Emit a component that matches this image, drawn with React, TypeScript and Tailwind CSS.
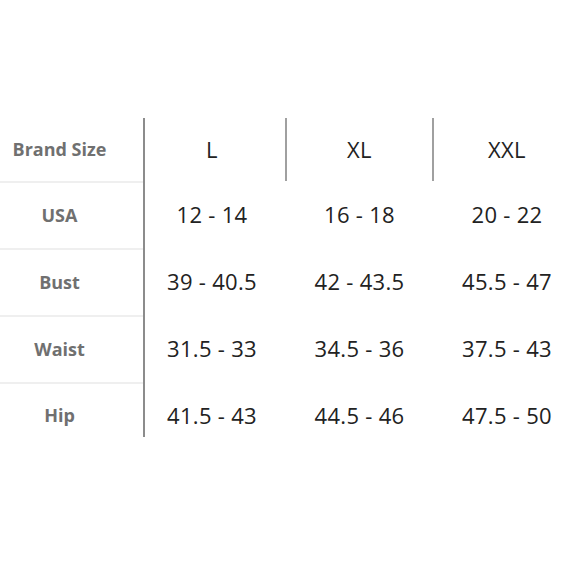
const header = ['L', 'XL', 'XXL'];

const rows: { label: string; values: string[] }[] = [
  { label: 'USA', values: ['12 - 14', '16 - 18', '20 - 22'] },
  { label: 'Bust', values: ['39 - 40.5', '42 - 43.5', '45.5 - 47'] },
  { label: 'Waist', values: ['31.5 - 33', '34.5 - 36', '37.5 - 43'] },
  { label: 'Hip', values: ['41.5 - 43', '44.5 - 46', '47.5 - 50'] },
];

// Size chart: label column on the left, three size columns
export default function App() {
  return (
    <div
      className="w-[580px] h-[580px] bg-white pt-[118px] text-[#222]"
      style={{ fontFamily: '"Open Sans", "Noto Sans", sans-serif' }}
    >
      {/* Header */}
      <div className="flex h-[63px]">
        <div className="w-[143px] flex items-center justify-center pr-[24px] text-[18px] font-bold text-[#707070]">
          Brand Size
        </div>
        <div className="w-[2px] bg-[#8c8c8c]" />
        <div className="w-[140px] flex items-center justify-center pr-[6px] text-[22px] tracking-[0.3px]">{header[0]}</div>
        <div className="w-[2px] bg-[#a0a0a0]" />
        <div className="w-[145px] flex items-center justify-center text-[22px] tracking-[0.3px]">{header[1]}</div>
        <div className="w-[2px] bg-[#a0a0a0]" />
        <div className="flex-1 flex items-center justify-center text-[22px] tracking-[0.3px]">{header[2]}</div>
      </div>

      {rows.map((row, i) => {
        const last = i === rows.length - 1;
        return (
          <div key={row.label} className="flex h-[67px]">
            <div
              className={`w-[143px] flex items-center justify-center pr-[24px] text-[18px] font-bold text-[#707070] border-t-2 border-[#efefef] ${last ? 'pb-[2px]' : ''}`}
            >
              {row.label}
            </div>
            <div className={`w-[2px] bg-[#8c8c8c] ${last ? 'h-[55px]' : ''}`} />
            <div className="w-[140px] flex items-center justify-center pr-[6px] text-[22px] tracking-[0.3px]">
              {row.values[0]}
            </div>
            <div className="w-[2px]" />
            <div className="w-[145px] flex items-center justify-center text-[22px] tracking-[0.3px]">{row.values[1]}</div>
            <div className="w-[2px]" />
            <div className="flex-1 flex items-center justify-center text-[22px] tracking-[0.3px]">{row.values[2]}</div>
          </div>
        );
      })}
    </div>
  );
}
